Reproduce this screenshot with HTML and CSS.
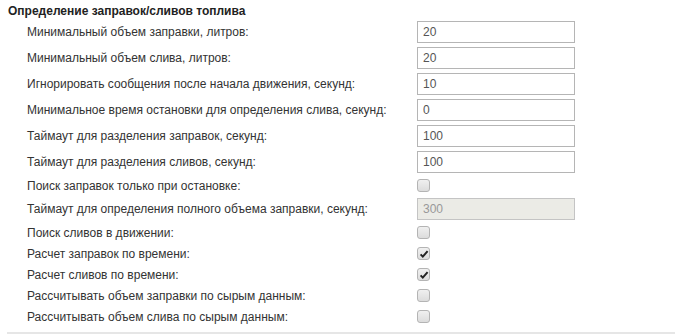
FILE: index.html
```html
<!DOCTYPE html>
<html lang="ru">
<head>
<meta charset="utf-8">
<link rel="stylesheet" href="styles.css">
</head>
<body>
<div class="section">
  <div class="title">Определение заправок/сливов топлива</div>
  <div class="form">
    <div class="row"><span class="label">Минимальный объем заправки, литров:</span><input class="field" type="text" value="20"></div>
    <div class="row"><span class="label">Минимальный объем слива, литров:</span><input class="field" type="text" value="20"></div>
    <div class="row"><span class="label">Игнорировать сообщения после начала движения, секунд:</span><input class="field" type="text" value="10"></div>
    <div class="row"><span class="label">Минимальное время остановки для определения слива, секунд:</span><input class="field" type="text" value="0"></div>
    <div class="row"><span class="label">Таймаут для разделения заправок, секунд:</span><input class="field" type="text" value="100"></div>
    <div class="row"><span class="label">Таймаут для разделения сливов, секунд:</span><input class="field" type="text" value="100"></div>
    <div class="row check-row"><span class="label">Поиск заправок только при остановке:</span><span class="box"></span></div>
    <div class="row"><span class="label">Таймаут для определения полного объема заправки, секунд:</span><input class="field disabled" type="text" value="300" disabled></div>
    <div class="row check-row"><span class="label">Поиск сливов в движении:</span><span class="box"></span></div>
    <div class="row check-row"><span class="label">Расчет заправок по времени:</span><span class="box checked"><svg viewBox="0 0 12 12" width="12" height="12"><path d="M2.6 6.4 L4.8 8.6 L9.6 3.2" fill="none" stroke="#222" stroke-width="2"/></svg></span></div>
    <div class="row check-row"><span class="label">Расчет сливов по времени:</span><span class="box checked"><svg viewBox="0 0 12 12" width="12" height="12"><path d="M2.6 6.4 L4.8 8.6 L9.6 3.2" fill="none" stroke="#222" stroke-width="2"/></svg></span></div>
    <div class="row check-row"><span class="label">Рассчитывать объем заправки по сырым данным:</span><span class="box"></span></div>
    <div class="row check-row"><span class="label">Рассчитывать объем слива по сырым данным:</span><span class="box"></span></div>
  </div>
  <div class="divider"></div>
</div>
</body>
</html>
```

FILE: styles.css
```css
html, body {
  margin: 0;
  padding: 0;
  background: #ffffff;
}
body {
  font-family: "Liberation Sans", Arial, sans-serif;
  font-size: 12px;
  color: #333333;
}
.section {
  padding: 3px 0 0 7px;
}
.title {
  font-weight: bold;
  color: #222222;
  height: 16px;
  line-height: 16px;
  padding-left: 1px;
}
.form {
  display: flex;
  flex-direction: column;
}
.row {
  display: grid;
  grid-template-columns: 390px 158px;
  align-items: center;
  height: 26px;
  padding-left: 20px;
}
.check-row {
  height: 21px;
}
.label {
  line-height: 16px;
  white-space: nowrap;
}
.field {
  box-sizing: border-box;
  width: 158px;
  height: 22px;
  margin: 0;
  border: 1px solid #b5b5b5;
  border-radius: 0;
  padding: 0 5px;
  font-family: "Liberation Sans", Arial, sans-serif;
  font-size: 12px;
  color: #555555;
  background: #ffffff;
  outline: none;
}
.field.disabled {
  background: #ebebe6;
  border-color: #c4c4c4;
  color: #999999;
}
.box {
  box-sizing: border-box;
  width: 13px;
  height: 13px;
  border: 1px solid #b4b4b4;
  border-radius: 3px;
  background: linear-gradient(#f0f0f0, #dcdcdc);
  display: flex;
  align-items: center;
  justify-content: center;
  position: relative;
}
.box svg {
  position: absolute;
  left: 0;
  top: 0;
}
.divider {
  margin-top: 5px;
  height: 2px;
  background: #e6e6e6;
}
```
